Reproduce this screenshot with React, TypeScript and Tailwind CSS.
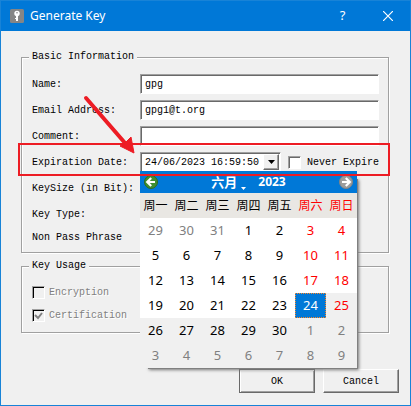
import React from "react";

const mono = "font-['Liberation_Mono','Noto_Sans_CJK_SC',monospace]";
const ui = "font-['Noto_Sans','Noto_Sans_CJK_SC',sans-serif]";
const sunken =
  "border-2 border-t-[#a0a0a0] border-l-[#a0a0a0] border-r-white border-b-white shadow-[inset_1px_1px_0_#696969]";
const sunkenDark =
  "border border-t-[#a0a0a0] border-l-[#a0a0a0] border-r-white border-b-white shadow-[inset_1px_1px_0_#000]";
const sunkenThin =
  "border border-t-[#a0a0a0] border-l-[#a0a0a0] border-r-white border-b-white shadow-[inset_1px_1px_0_#696969]";
const raised =
  "border border-t-white border-l-white border-r-[#696969] border-b-[#696969] shadow-[inset_-1px_-1px_0_#a0a0a0]";
const group =
  "border border-[#a0a0a0] pl-[10px] pr-[9px] shadow-[1px_1px_0_#fff,inset_1px_1px_0_#fff]";
const legend = "-ml-[3px] bg-[#f0f0f0] px-[3px] leading-[14px]";
const row = "flex h-5 items-center";
const labelCol = "w-[108px] shrink-0";

const weekdays = ["周一", "周二", "周三", "周四", "周五", "周六", "周日"];
const weeks = [
  [29, 30, 31, 1, 2, 3, 4],
  [5, 6, 7, 8, 9, 10, 11],
  [12, 13, 14, 15, 16, 17, 18],
  [19, 20, 21, 22, 23, 24, 25],
  [26, 27, 28, 29, 30, 1, 2],
  [3, 4, 5, 6, 7, 8, 9],
];

function dayClass(week: number, col: number) {
  const index = week * 7 + col;
  if (index === 26) return "bg-[#0078d7] text-white outline-1 -outline-offset-1 outline-dotted outline-[#ff8728]";
  const bg = index > 26 ? "bg-[#f0f0f0]" : "bg-white";
  const color =
    index < 3 || index > 32 ? "text-[#808080]" : col > 4 ? "text-[#ff0000]" : "text-black";
  return `${bg} ${color}`;
}

function Arrow({ back }: { back?: boolean }) {
  return (
    <svg viewBox="0 0 14 14" className={back ? "size-[14px]" : "size-[14px] rotate-180"}>
      <circle cx="7" cy="7" r="6.5" fill={back ? "#3f8f2f" : "#9c9c9c"} stroke={back ? "#2f6b22" : "#858585"} />
      <path d="M7.2 3 3.2 7l4 4M3.6 7H11" fill="none" stroke="#fff" strokeWidth="2.2" />
    </svg>
  );
}

function Calendar() {
  return (
    <div className={`absolute top-[19px] left-0 w-[217px] ${ui}`}>
      <div className="absolute -right-px -bottom-px left-2 top-2 bg-[#808080] shadow-[1px_1px_3px_#777]" />
      <div className="relative">
        <div className="flex h-[22px] items-center bg-[#0078d7] px-1 text-[13px] font-bold text-white">
          <button type="button" aria-label="Previous month"><Arrow back /></button>
          <div className="flex flex-1 items-center justify-center gap-3">
            <button type="button" className="flex items-center gap-1 leading-5">
              六月
              <svg viewBox="0 0 5 3" className="mt-3 h-[3px] w-[5px]"><path d="M0 0h5L2.5 3z" fill="#fff" /></svg>
            </button>
            <button type="button" className="text-[12px] leading-5">2023</button>
          </div>
          <button type="button" aria-label="Next month"><Arrow /></button>
        </div>
        <table className="w-full table-fixed border-collapse text-center">
          <thead className="bg-[#e9e7e3] text-[12px]">
            <tr className="h-[25px]">
              {weekdays.map((d, i) => (
                <th key={d} scope="col" className={i > 4 ? "p-0 font-normal text-[#ff0000]" : "p-0 font-normal text-black"}>{d}</th>
              ))}
            </tr>
          </thead>
          <tbody className="text-[13px]">
            {weeks.map((week, w) => (
              <tr key={w} className="h-[25px]">
                {week.map((d, c) => (
                  <td key={c} className={`p-0 ${dayClass(w, c)}`}>
                    <button type="button" className="block h-[25px] w-full leading-[25px]">{d}</button>
                  </td>
                ))}
              </tr>
            ))}
          </tbody>
        </table>
      </div>
    </div>
  );
}

function Field({ id, label, value }: { id: string; label: string; value: string }) {
  return (
    <div className={row}>
      <label htmlFor={id} className={labelCol}>{label}</label>
      <input id={id} defaultValue={value} className={`h-5 min-w-0 flex-1 bg-white px-1 outline-none ${sunkenThin}`} />
    </div>
  );
}

function Usage({ label, checked }: { label: string; checked?: boolean }) {
  return (
    <label className="flex h-[14px] items-center gap-1 text-[#808080] [text-shadow:1px_1px_0_#fff]">
      <span className="relative flex size-[13px]">
        <input type="checkbox" disabled defaultChecked={checked} className={`size-[13px] appearance-none bg-[#f0f0f0] ${sunkenDark}`} />
        {checked && (
          <svg viewBox="0 0 13 13" className="absolute inset-0"><path d="M3 6l3 3 4-5" fill="none" stroke="#808080" strokeWidth="2" /></svg>
        )}
      </span>
      {label}
    </label>
  );
}

export default function App() {
  return (
    <main className={`flex min-h-screen flex-col border border-[#1883d7] bg-[#f0f0f0] text-[10px] text-black ${mono}`}>
      <header className={`flex h-[30px] items-center bg-[#0078d7] pl-[9px] text-white ${ui}`}>
        <svg viewBox="0 0 14 14" className="size-[14px]">
          <rect width="14" height="14" rx="1.5" fill="#858585" />
          <circle cx="7" cy="4.5" r="2.7" fill="#fff" />
          <path d="M6 6h2v6H6zM5 9h2v1H5z" fill="#fff" />
          <circle cx="7" cy="3.8" r=".8" fill="#858585" />
        </svg>
        <h1 className="ml-[6px] flex-1 text-[12px]">Generate Key</h1>
        <button type="button" aria-label="Help" className="w-[45px] text-[13px]">?</button>
        <button type="button" aria-label="Close" className="flex w-[45px] justify-center">
          <svg viewBox="0 0 10 10" className="size-[10px]"><path d="M0 0l10 10M10 0L0 10" stroke="#fff" strokeWidth="1.2" /></svg>
        </button>
      </header>

      <form className="flex flex-col pt-[19px]">
        <div className="flex flex-col gap-[6px] pl-5 pr-[21px]">
          <fieldset className={`pt-[10px] pb-[7px] ${group}`}>
            <legend className={legend}>Basic Information</legend>
            <div className="flex flex-col gap-[6px]">
              <Field id="name" label="Name:" value="gpg" />
              <Field id="email" label="Email Address:" value="gpg1@t.org" />
              <Field id="comment" label="Comment:" value="" />
              <div className={`relative ${row}`}>
                <label htmlFor="date" className={labelCol}>Expiration Date:</label>
                <div className="relative w-[141px]">
                  <div className={`flex h-5 bg-white p-px ${sunkenThin}`}>
                    <input id="date" defaultValue="24/06/2023 16:59:50" className="min-w-0 flex-1 bg-transparent pl-[3px] outline-none" />
                    <button type="button" aria-label="Open calendar" className={`flex w-4 items-center justify-center bg-[#f0f0f0] ${raised}`}>
                      <svg viewBox="0 0 7 4" className="h-1 w-[7px]"><path d="M0 0h7L3.5 4z" /></svg>
                    </button>
                  </div>
                  <Calendar />
                </div>
                <label className="ml-[7px] flex items-center gap-[6px]">
                  <input type="checkbox" className={`size-[13px] appearance-none bg-white ${sunkenThin}`} />
                  Never Expire
                </label>
                <div className="pointer-events-none absolute -top-[9px] -right-[11px] -left-[14px] h-[33px] border-2 border-[#ed1c24]" />
                <svg viewBox="0 0 60 64" className="pointer-events-none absolute -top-[58px] left-[50px] h-16 w-[60px]">
                  <path d="M4 4L43 49" stroke="#ed1c24" strokeWidth="4" strokeLinecap="round" />
                  <path d="M52 59L38 52L43 49L45 47L49 43Z" fill="#ed1c24" stroke="#ed1c24" />
                </svg>
              </div>
              <div className={row}>KeySize (in Bit):</div>
              <div className={row}>Key Type:</div>
              <div className="h-[15px] leading-[15px]">Non Pass Phrase</div>
            </div>
          </fieldset>

          <fieldset className={`pt-3 pb-[10px] ${group}`}>
            <legend className={legend}>Key Usage</legend>
            <div className="flex flex-col gap-[9px]">
              <Usage label="Encryption" />
              <Usage label="Certification" checked />
            </div>
          </fieldset>
        </div>

        <div className="mt-9 flex justify-end gap-2 pr-[11px] pb-3">
          <button type="button" className="h-6 w-[76px] border border-[#696969] shadow-[inset_1px_1px_0_#fff,inset_-1px_-1px_0_#a0a0a0]">OK</button>
          <button type="button" className={`h-6 w-[76px] ${raised}`}>Cancel</button>
        </div>
      </form>
    </main>
  );
}
